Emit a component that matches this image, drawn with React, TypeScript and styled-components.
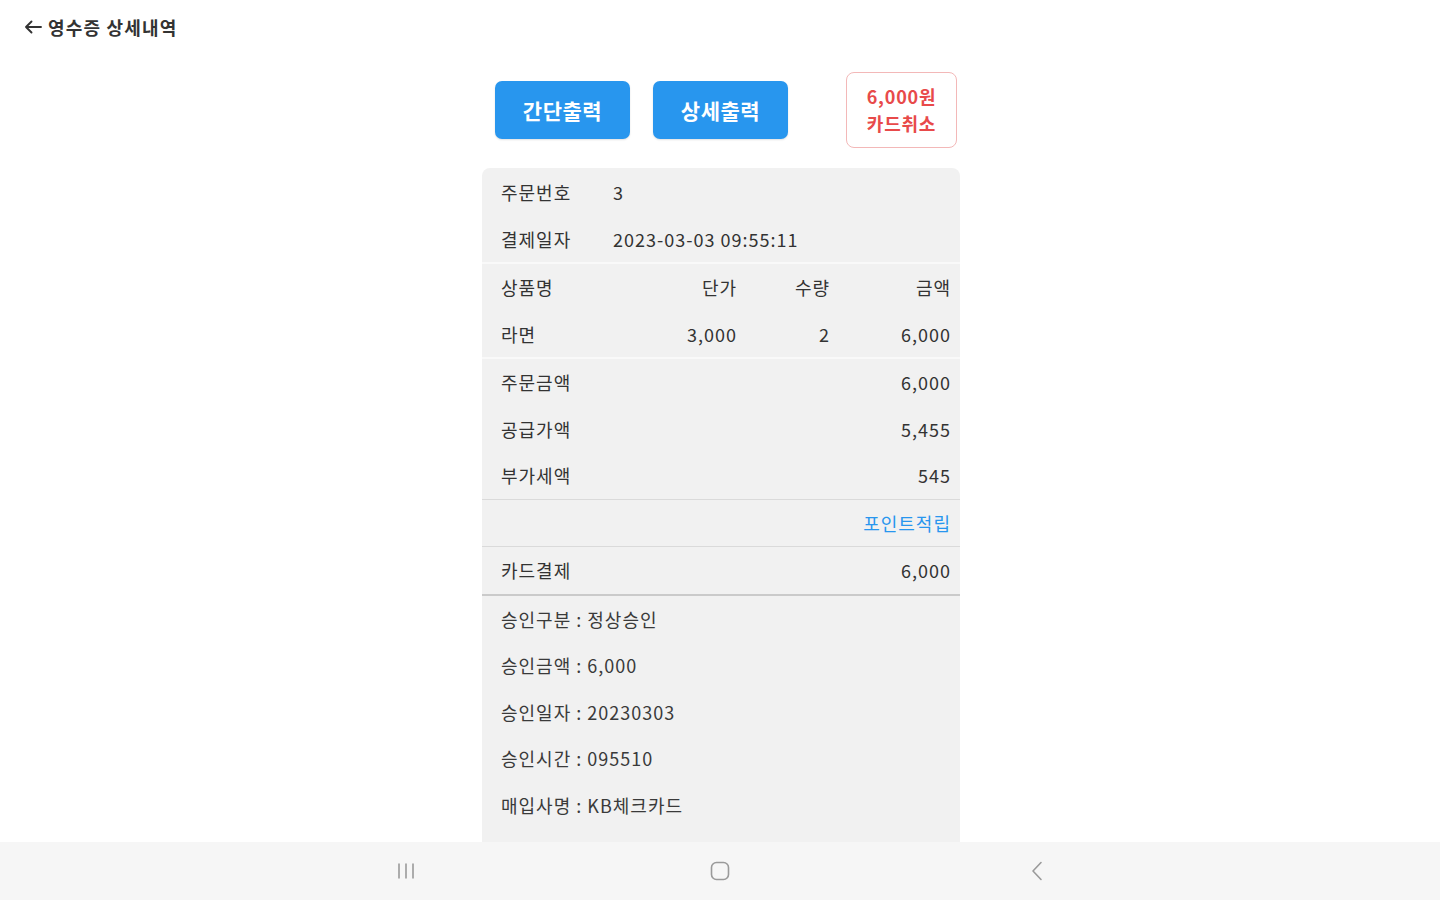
import React from "react";
import styled, { createGlobalStyle } from "styled-components";

const Global = createGlobalStyle`
  html, body { margin: 0; padding: 0; background: #ffffff; }
  body {
    font-family: "Noto Sans CJK KR", "Noto Sans", sans-serif;
    color: #333;
    overflow: hidden;
  }
  * { box-sizing: border-box; }
`;

const Page = styled.div`
  width: 1440px;
  height: 900px;
  position: relative;
  overflow: hidden;
`;

const Header = styled.header`
  height: 56px;
  display: flex;
  align-items: center;
  gap: 5px;
  padding-left: 23px;
  padding-bottom: 2px;
`;

const Title = styled.h1`
  margin: 0;
  font-size: 18px;
  font-weight: 700;
  color: #333;
  letter-spacing: 1.2px;
`;

const Content = styled.main`
  width: 478px;
  margin: 16px 0 0 482px;
  display: flex;
  flex-direction: column;
  gap: 20px;
`;

const ActionRow = styled.div`
  display: flex;
  align-items: center;
  padding-left: 13px;
  padding-right: 3px;
  height: 76px;
`;

const PrintButton = styled.button`
  width: 135px;
  height: 58px;
  border: none;
  border-radius: 7px;
  background: #2896ee;
  color: #fff;
  font-family: inherit;
  font-size: 21px;
  font-weight: 700;
  letter-spacing: 0.5px;
  margin-right: 23px;
  box-shadow: 0 1px 2px rgba(0, 0, 0, 0.12);
`;

const CancelButton = styled.button`
  margin-left: auto;
  width: 111px;
  height: 76px;
  border: 1.5px solid #f3b8b8;
  border-radius: 8px;
  background: #fff;
  color: #e84a4a;
  font-family: inherit;
  font-size: 18px;
  font-weight: 700;
  letter-spacing: 0.8px;
  line-height: 27px;
  display: flex;
  flex-direction: column;
  align-items: center;
  justify-content: center;
  padding: 0;
`;

const Card = styled.section`
  background: #f1f1f1;
  border-radius: 8px 8px 0 0;
  display: flex;
  flex-direction: column;
  font-size: 18px;
  letter-spacing: 1px;
  color: #333;
`;

const Group = styled.div<{ $sep?: "band" | "line" | "dark" }>`
  display: flex;
  flex-direction: column;
  border-bottom: ${(p) =>
    p.$sep === "band"
      ? "2px solid #f9f9f9"
      : p.$sep === "line"
      ? "1.5px solid #dadada"
      : p.$sep === "dark"
      ? "2px solid #cacaca"
      : "none"};
`;

const InfoRow = styled.div`
  height: 47px;
  display: grid;
  grid-template-columns: 112px 1fr;
  align-items: center;
  padding: 0 9px 0 19px;
`;

const ItemRow = styled.div`
  height: 46.5px;
  display: grid;
  grid-template-columns: 1fr 93px 93px 121px;
  align-items: center;
  padding: 0 9px 0 19px;
`;

const Cell = styled.span<{ $right?: boolean }>`
  text-align: ${(p) => (p.$right ? "right" : "left")};
`;

const SumRow = styled.div`
  height: 46.5px;
  display: flex;
  align-items: center;
  justify-content: space-between;
  padding: 0 9px 0 19px;
`;

const PointLink = styled.span`
  margin-left: auto;
  color: #2896ee;
`;

const ApprovalRow = styled.div`
  height: 46.5px;
  display: flex;
  align-items: center;
  padding: 0 19px;
  color: #3a3a3a;
`;

const Approvals = styled.div`
  display: flex;
  flex-direction: column;
  padding-bottom: 40px;
`;

const NavBar = styled.nav`
  position: absolute;
  left: 0;
  right: 0;
  bottom: 0;
  height: 58px;
  background: #f6f6f6;
  display: grid;
  grid-template-columns: 1fr 1fr 1fr;
  align-items: center;
  padding: 0 396px;
`;

const NavSlot = styled.div<{ $align: "start" | "center" | "end" }>`
  display: flex;
  justify-content: ${(p) =>
    p.$align === "start" ? "flex-start" : p.$align === "end" ? "flex-end" : "center"};
`;

const BackArrow = () => (
  <svg width="20" height="16" viewBox="0 0 20 16" fill="none">
    <path d="M18 8H3M8.5 2.5L3 8l5.5 5.5" stroke="#333" strokeWidth="1.9" strokeLinecap="round" strokeLinejoin="round" />
  </svg>
);

const MenuIcon = () => (
  <svg width="20" height="18" viewBox="0 0 20 18" fill="none">
    <path d="M3 1.5v15M10 1.5v15M17 1.5v15" stroke="#9a9a9a" strokeWidth="1.6" />
  </svg>
);

const HomeIcon = () => (
  <svg width="20" height="20" viewBox="0 0 20 20" fill="none">
    <rect x="1.5" y="1.5" width="17" height="17" rx="5" stroke="#9a9a9a" strokeWidth="1.6" />
  </svg>
);

const NavBackIcon = () => (
  <svg width="14" height="20" viewBox="0 0 14 20" fill="none">
    <path d="M11 1.5L3 10l8 8.5" stroke="#9a9a9a" strokeWidth="1.6" strokeLinecap="round" strokeLinejoin="round" />
  </svg>
);

const items = [{ name: "라면", price: "3,000", qty: "2", amount: "6,000" }];

const approvals = [
  "승인구분 : 정상승인",
  "승인금액 : 6,000",
  "승인일자 : 20230303",
  "승인시간 : 095510",
  "매입사명 : KB체크카드",
];

export default function App() {
  return (
    <Page>
      <Global />
      <Header>
        <BackArrow />
        <Title>영수증 상세내역</Title>
      </Header>
      <Content>
        <ActionRow>
          <PrintButton>간단출력</PrintButton>
          <PrintButton>상세출력</PrintButton>
          <CancelButton>
            <span>6,000원</span>
            <span>카드취소</span>
          </CancelButton>
        </ActionRow>
        <Card>
          <Group $sep="band">
            <InfoRow>
              <span>주문번호</span>
              <span>3</span>
            </InfoRow>
            <InfoRow>
              <span>결제일자</span>
              <span>2023-03-03 09:55:11</span>
            </InfoRow>
          </Group>
          <Group $sep="band">
            <ItemRow>
              <Cell>상품명</Cell>
              <Cell $right>단가</Cell>
              <Cell $right>수량</Cell>
              <Cell $right>금액</Cell>
            </ItemRow>
            {items.map((it) => (
              <ItemRow key={it.name}>
                <Cell>{it.name}</Cell>
                <Cell $right>{it.price}</Cell>
                <Cell $right>{it.qty}</Cell>
                <Cell $right>{it.amount}</Cell>
              </ItemRow>
            ))}
          </Group>
          <Group $sep="line">
            <SumRow>
              <span>주문금액</span>
              <span>6,000</span>
            </SumRow>
            <SumRow>
              <span>공급가액</span>
              <span>5,455</span>
            </SumRow>
            <SumRow>
              <span>부가세액</span>
              <span>545</span>
            </SumRow>
          </Group>
          <Group $sep="line">
            <SumRow>
              <PointLink>포인트적립</PointLink>
            </SumRow>
          </Group>
          <Group $sep="dark">
            <SumRow>
              <span>카드결제</span>
              <span>6,000</span>
            </SumRow>
          </Group>
          <Approvals>
            {approvals.map((a) => (
              <ApprovalRow key={a}>{a}</ApprovalRow>
            ))}
          </Approvals>
        </Card>
      </Content>
      <NavBar>
        <NavSlot $align="start">
          <MenuIcon />
        </NavSlot>
        <NavSlot $align="center">
          <HomeIcon />
        </NavSlot>
        <NavSlot $align="end">
          <NavBackIcon />
        </NavSlot>
      </NavBar>
    </Page>
  );
}
